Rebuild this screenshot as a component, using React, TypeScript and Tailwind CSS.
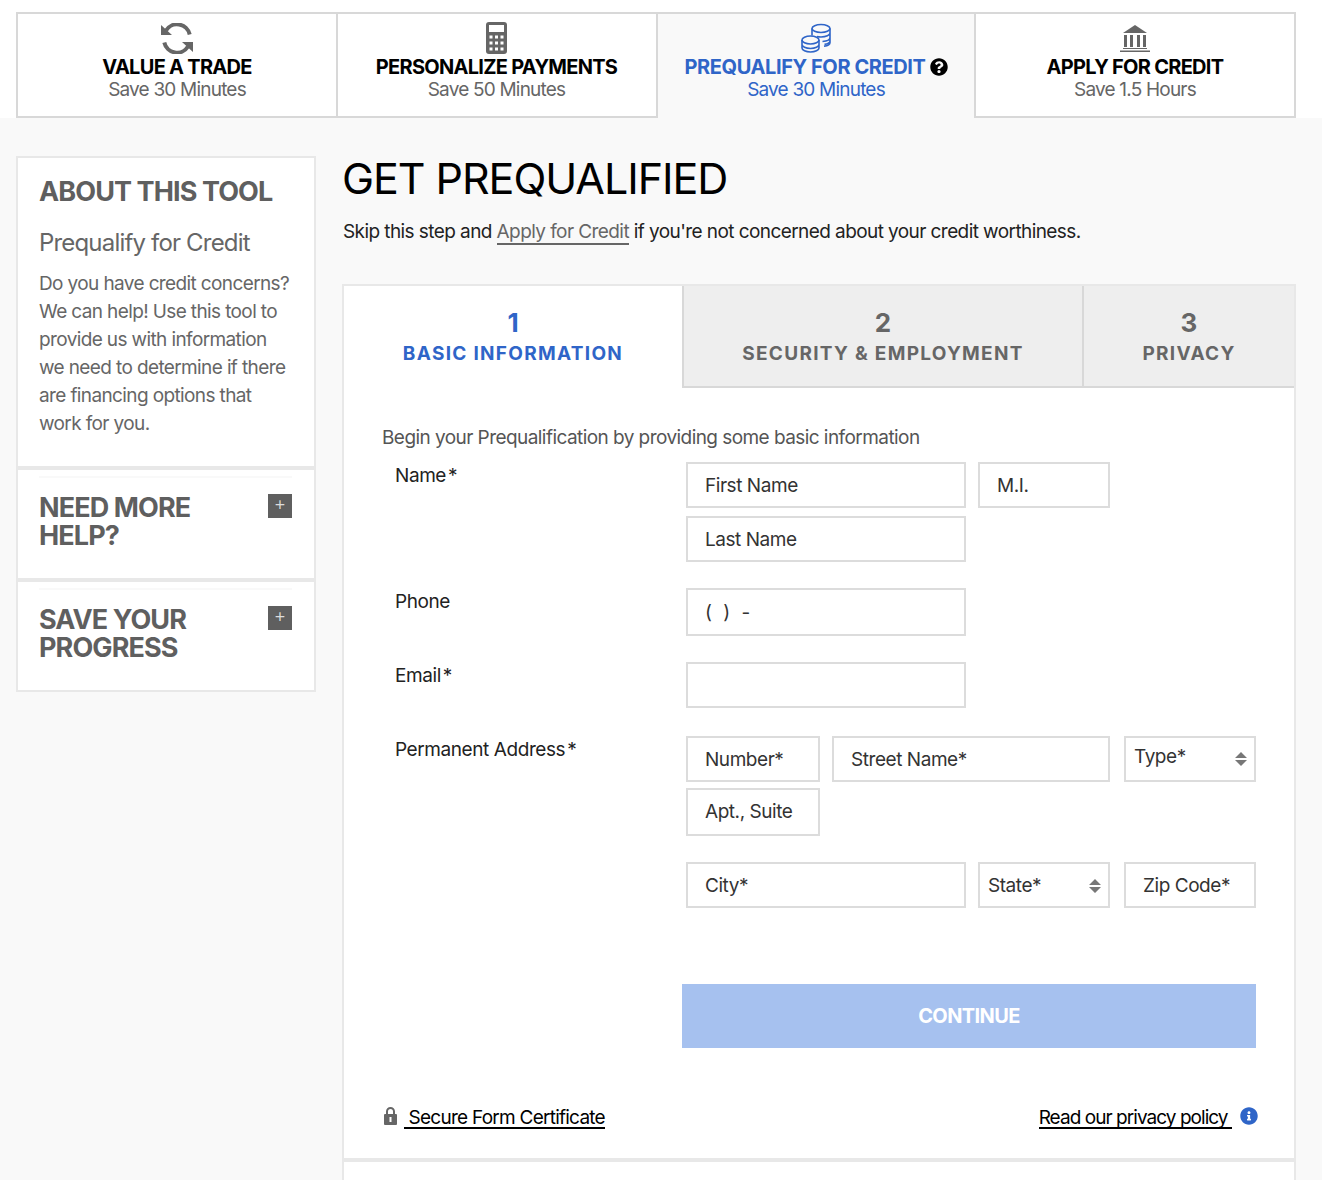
import type { ReactNode } from 'react';
import { FaInfoCircle, FaQuestionCircle } from 'react-icons/fa';

const SyncIcon = () => (
  <svg width="32" height="31" viewBox="0 0 32 31" fill="none">
    <path d="M5 7.500A13 13 0 0 1 28.700 11.500M27 23.500A13 13 0 0 1 3.300 19.500" stroke="#666" strokeWidth="4" />
    <path d="M0 2v10h11zM32 29V19H21z" fill="#666" />
  </svg>
);

const CalcIcon = () => (
  <svg width="21" height="32" viewBox="0 0 21 32">
    <rect width="21" height="32" rx="3" fill="#666" />
    <rect x="3" y="3" width="15" height="7" fill="#fff" />
    <path
      d="M3.500 13.500h3v3h-3zM9 13.500h3v3H9zM14.500 13.500h3v3h-3zM3.500 19.500h3v3h-3zM9 19.500h3v3H9zM14.500 19.500h3v3h-3zM3.500 25.500h3v3h-3zM9 25.500h3v3H9zM14.500 25.500h3v3h-3z"
      fill="#fff"
    />
  </svg>
);

const CoinsIcon = () => (
  <svg width="30" height="30" viewBox="0 0 30 30" fill="none" stroke="#2f65c8" strokeWidth="1.6">
    <ellipse cx="20" cy="5.500" rx="9" ry="4" />
    <path d="M11 5.500v7M29 5.500v14c0 1.800-2.500 3.300-6 3.800M29 10c0 2.200-4 4-9 4-1.500 0-3-.2-4-.5M29 14.500c0 2-3.200 3.700-7.500 4M29 18c0 1.500-2 2.800-5.500 3.400" />
    <ellipse cx="9.500" cy="17" rx="8.500" ry="4" />
    <path d="M1 17v8c0 2.200 3.800 4 8.500 4s8.500-1.800 8.500-4v-8M1 21.500c0 2.200 3.800 4 8.500 4s8.500-1.800 8.500-4" />
  </svg>
);

const BankIcon = () => (
  <svg width="30" height="27" viewBox="0 0 30 27" fill="#666">
    <path d="M15 0 3 8h24z" />
    <path d="M4 10h3v12H4zM10 10h3v12h-3zM17 10h3v12h-3zM23 10h3v12h-3z" />
    <path d="M3 23h24v1H3zM0 25.500h30V27H0z" />
  </svg>
);

const LockIcon = () => (
  <svg width="13" height="18" viewBox="0 0 13 18" className="mb-[5px] ml-[2px]">
    <path d="M3 8V4.500a3.500 3.500 0 0 1 7 0V8" fill="none" stroke="#666" strokeWidth="2" />
    <rect y="7" width="13" height="11" rx="1" fill="#666" />
    <rect x="5.500" y="10" width="2" height="5" fill="#fff" />
  </svg>
);

const SortIcon = () => (
  <svg width="12" height="14" viewBox="0 0 12 14" fill="#777">
    <path d="M6 0l6 6H0zM0 8h12l-6 6z" />
  </svg>
);

const steps = [
  { title: 'VALUE A TRADE', sub: 'Save 30 Minutes', icon: <SyncIcon />, cls: 'w-[322px] border-x-2 border-b-2 bg-white' },
  { title: 'PERSONALIZE PAYMENTS', sub: 'Save 50 Minutes', icon: <CalcIcon />, cls: 'w-[320px] border-r-2 border-b-2 bg-white pr-[1px]' },
  { title: 'PREQUALIFY FOR CREDIT', sub: 'Save 30 Minutes', icon: <CoinsIcon />, cls: 'w-[316px] bg-[#f9f9f9]', active: true },
  { title: 'APPLY FOR CREDIT', sub: 'Save 1.5 Hours', icon: <BankIcon />, cls: 'w-[322px] border-x-2 border-b-2 bg-white' },
];

const Box = ({ w, children, h = 'h-[46px]' }: { w: string; h?: string; children?: ReactNode }) => (
  <div className={`${w} ${h} flex items-center border-2 border-[#dcdcdc] bg-white pl-[17px] pr-2 pt-[2px] text-[19px] tracking-[-0.45px] text-[#333]`}>
    {children}
  </div>
);

const Select = ({ w, label, top }: { w: string; label: string; top?: boolean }) => (
  <div className={`${w} h-[46px] flex items-center justify-between border-2 border-[#dcdcdc] bg-white pr-[7px] text-[19px] tracking-[-0.45px] text-[#333] ${top ? 'pl-[8px]' : 'pl-[8px] pt-[2px]'}`}>
    <span className={top ? 'mb-[4px]' : ''}>{label}</span>
    <SortIcon />
  </div>
);

const Label = ({ children, req }: { children: ReactNode; req?: boolean }) => (
  <div className="w-[304px] pl-[13px] pt-[1px] text-[19px] leading-[26px] tracking-[-0.42px] text-[#222]">
    {children}
    {req && <span className="ml-[2px]">*</span>}
  </div>
);

const Side = ({ title, last }: { title: ReactNode; last?: boolean }) => (
  <div className={`border-x-2 border-[#e8e8e8] bg-white pl-[21px] pr-[22px] pt-[6px] ${last ? 'h-[110px] border-b-2' : 'h-[112px] border-b-4'}`}>
    <div className="flex justify-between border-t-2 border-[#f9f9f9] pt-[16px]">
      <h3 className="text-[27px] font-bold leading-[28px] tracking-[-0.9px] text-[#5f5f5f]">{title}</h3>
      <span className="flex h-6 w-6 items-center justify-center bg-[#5f5f5f] pb-[4px] text-[19px] font-light text-[#ddd]">+</span>
    </div>
  </div>
);

const Tab = ({ n, label, cls }: { n: number; label: string; cls: string }) => (
  <div className={`pt-[22px] ${cls}`}>
    <div className="text-[26px] font-bold leading-[30px]">{n}</div>
    <div className="mt-[1px] text-[19px] font-bold leading-[30px] tracking-[1.3px]">{label}</div>
  </div>
);

export default function App() {
  return (
    <div className="min-h-[1180px] overflow-hidden bg-[#f9f9f9] font-['Inter',sans-serif]">
      <div className="bg-white px-4 pt-3">
        <div className="flex h-[106px] w-[1280px]">
          {steps.map((s) => (
            <div key={s.title} className={`${s.cls} flex flex-col items-center border-t-2 border-[#d8d8d8] pt-[7px]`}>
              <div className="flex h-[34px] items-center">{s.icon}</div>
              <div className={`flex items-center gap-[4px] text-[20px] font-bold leading-[24px] ${s.active ? 'tracking-[-0.4px] text-[#2f65c8]' : 'tracking-[-0.72px] text-black'}`}>
                {s.title}
                {s.active && <FaQuestionCircle size={18} color="#000" />}
              </div>
              <div className={`mt-[1px] text-[19px] leading-[20px] tracking-[-0.8px] ${s.active ? 'text-[#2f65c8]' : 'text-[#666]'}`}>{s.sub}</div>
            </div>
          ))}
        </div>
      </div>

      <div className="flex gap-[26px] px-4 pt-[38px]">
        <aside className="w-[300px] shrink-0">
          <div className="h-[314px] border-x-2 border-b-4 border-t-2 border-[#e8e8e8] bg-white pl-[21px] pr-2 pt-[19px]">
            <h3 className="text-[27px] font-bold leading-[30px] tracking-[-0.9px] text-[#5f5f5f]">ABOUT THIS TOOL</h3>
            <h4 className="mt-[21px] text-[24px] leading-[30px] tracking-[-0.82px] text-[#666]">Prequalify for Credit</h4>
            <p className="mt-[12px] w-[254px] text-[19px] leading-[28px] tracking-[-0.62px] text-[#666]">
              Do you have credit concerns? We can help! Use this tool to provide us with information we need to determine if there are financing options that work for you.
            </p>
          </div>
          <Side title={<>NEED MORE<br />HELP?</>} />
          <Side title={<>SAVE YOUR<br />PROGRESS</>} last />
        </aside>

        <main className="-mt-[1px] w-[954px]">
          <h1 className="text-[43px] leading-[46px] tracking-[-1.05px] text-black">GET PREQUALIFIED</h1>
          <p className="mt-[18px] pl-[1px] text-[19px] leading-[26px] tracking-[-0.58px] text-[#222]">
            Skip this step and <a className="border-b-2 border-[#666] text-[#666]">Apply for Credit</a> if you're not concerned about your credit worthiness.
          </p>

          <div className="mt-[39px] border-x-2 border-t-2 border-[#e8e8e8] bg-white">
            <div className="flex h-[102px] text-center">
              <Tab n={1} label="BASIC INFORMATION" cls="w-[338px] text-[#2f65c8]" />
              <Tab n={2} label="SECURITY & EMPLOYMENT" cls="w-[402px] border-x-2 border-b-2 border-[#d8d8d8] bg-[#eeeeee] text-[#666]" />
              <Tab n={3} label="PRIVACY" cls="flex-1 border-b-2 border-[#d8d8d8] bg-[#eeeeee] text-[#666]" />
            </div>

            <div className="px-[38px] pt-[37px]">
              <p className="text-[19px] leading-[26px] tracking-[-0.56px] text-[#555]">Begin your Prequalification by providing some basic information</p>

              <div className="mt-[11px] flex">
                <Label req>Name</Label>
                <div className="flex w-[570px] flex-wrap gap-x-3 gap-y-2">
                  <Box w="w-[280px]">First Name</Box>
                  <Box w="w-[132px]">M.I.</Box>
                  <div className="w-full"><Box w="w-[280px]">Last Name</Box></div>
                </div>
              </div>

              <div className="mt-[26px] flex">
                <Label>Phone</Label>
                <Box w="w-[280px]" h="h-[48px]"><span className="tracking-[3px]">(&nbsp;)&nbsp;-</span></Box>
              </div>

              <div className="mt-[26px] flex">
                <Label req>Email</Label>
                <Box w="w-[280px]" />
              </div>

              <div className="mt-[28px] flex">
                <Label req>Permanent Address</Label>
                <div className="w-[570px]">
                  <div className="flex">
                    <Box w="w-[134px]">Number*</Box>
                    <div className="ml-3"><Box w="w-[278px]">Street Name*</Box></div>
                    <div className="ml-[14px]"><Select w="w-[132px]" label="Type*" top /></div>
                  </div>
                  <div className="mt-[6px]"><Box w="w-[134px]" h="h-[48px]"><span className="mb-[2px]">Apt., Suite</span></Box></div>
                  <div className="mt-[26px] flex">
                    <Box w="w-[280px]">City*</Box>
                    <div className="ml-3"><Select w="w-[132px]" label="State*" /></div>
                    <div className="ml-[14px]"><Box w="w-[132px]">Zip Code*</Box></div>
                  </div>
                </div>
              </div>

              <div className="ml-[300px] mt-[76px] flex h-[64px] w-[574px] items-center justify-center bg-[#a6c1ef] text-[20px] font-bold tracking-[-0.6px] text-white">
                CONTINUE
              </div>

              <div className="mt-[57px] flex h-[26px] items-center justify-between text-[19px] tracking-[-0.75px] text-black">
                <div className="flex items-center gap-[7px]">
                  <LockIcon />
                  <a className="border-b-2 border-black leading-[19px]">&nbsp;Secure Form Certificate</a>
                </div>
                <div className="-mr-[2px] flex items-center gap-[8px]">
                  <a className="border-b-2 border-black leading-[19px] tracking-[-0.95px]">Read our privacy policy&nbsp;</a>
                  <FaInfoCircle size={18} color="#2f65c8" className="mb-[5px]" />
                </div>
              </div>
            </div>

            <div className="mt-[27px] h-[30px] border-t-4 border-[#e8e8e8]" />
          </div>
        </main>
      </div>
    </div>
  );
}
